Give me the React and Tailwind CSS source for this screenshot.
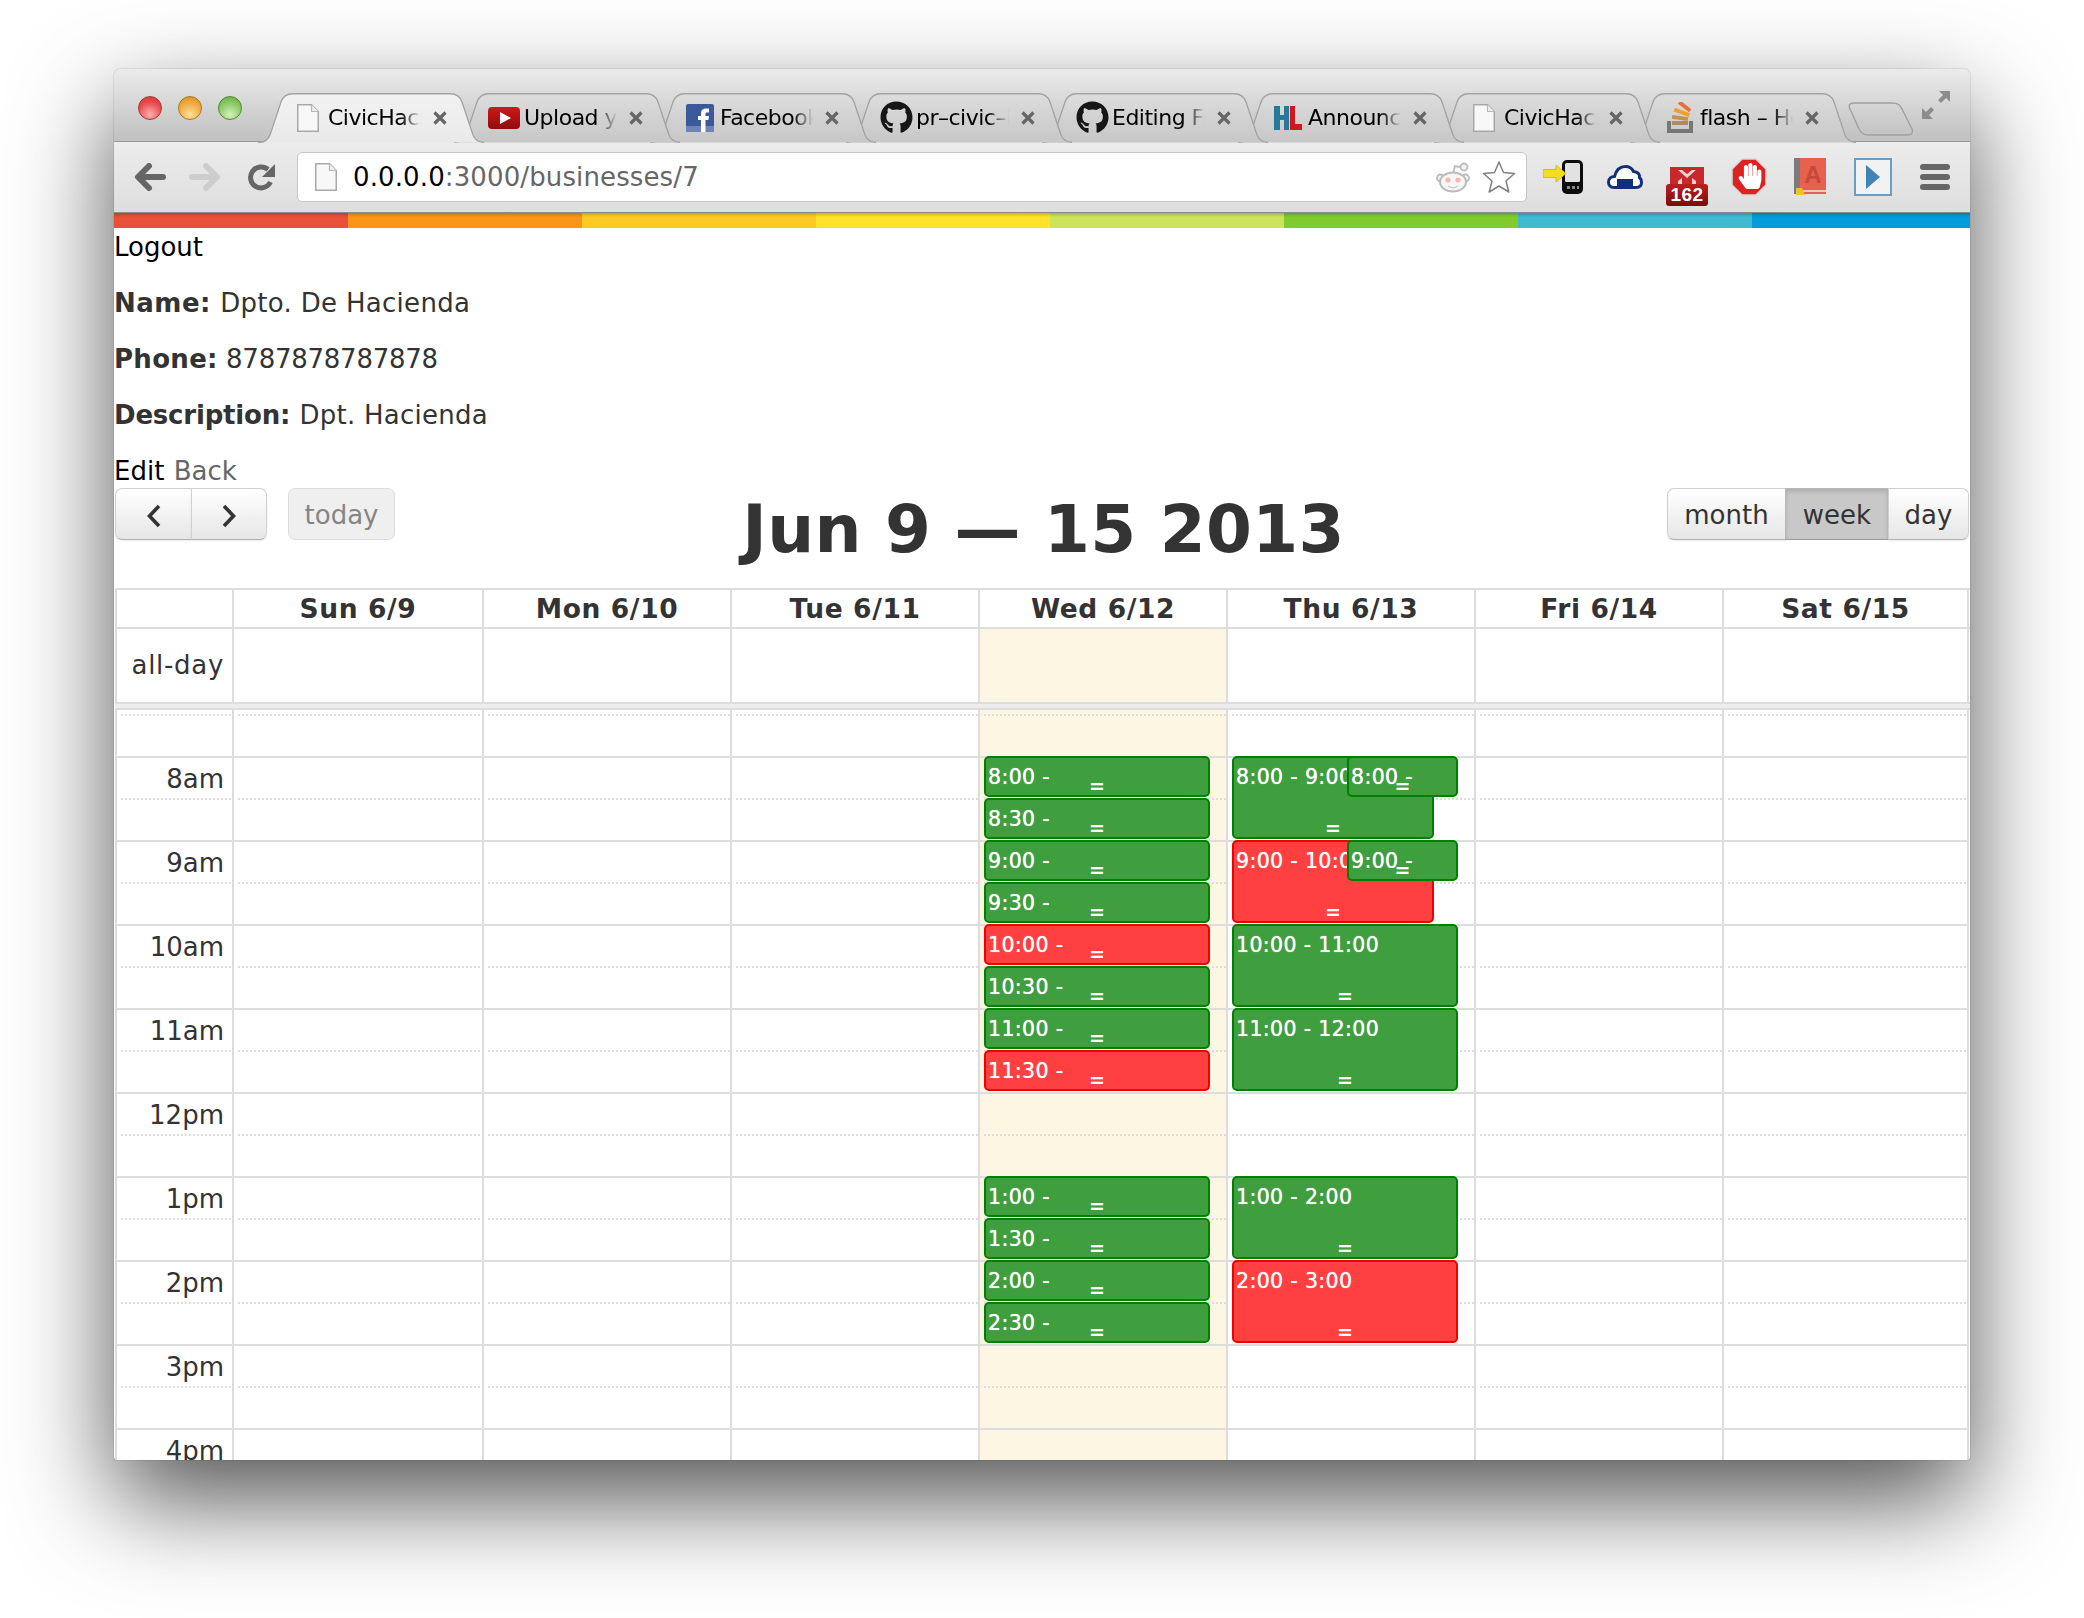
import React from "react";
import { FaGithub, FaHandPaper } from "react-icons/fa";

const COLS = "grid grid-cols-[117px_250px_248px_248px_248px_248px_248px_247px]";
const DAYS = ["Sun 6/9", "Mon 6/10", "Tue 6/11", "Wed 6/12", "Thu 6/13", "Fri 6/14", "Sat 6/15"];
const RAINBOW = ["bg-[#e8503a]", "bg-[#fc9419]", "bg-[#ffc926]", "bg-[#ffe229]", "bg-[#cde35a]", "bg-[#80cb2e]", "bg-[#3fbbd0]", "bg-[#049cdb]"];
const DOTS = "bg-[repeating-linear-gradient(to_right,#ddd_0,#ddd_2px,transparent_2px,transparent_4px)] bg-no-repeat bg-[length:calc(100%-4px)_2px] bg-[position:4px_0] ";

function Doc() {
  return (
    <svg width="22" height="28" viewBox="0 0 22 28">
      <path d="M.75.75H14.5L21.25 7.5V27.25H.75Z" fill="#f8f8f8" stroke="#a8a8a8" strokeWidth="1.5" />
      <path d="M14.5.75V7.5H21.25" fill="#eee" stroke="#b8b8b8" strokeWidth="1.2" />
    </svg>
  );
}
function YouTube() {
  return (
    <svg width="32" height="22" viewBox="0 0 32 22">
      <defs><linearGradient id="yt" x1="0" y1="0" x2="0" y2="1"><stop offset="0" stopColor="#d01818" /><stop offset="1" stopColor="#8e0c0c" /></linearGradient></defs>
      <rect width="32" height="22" rx="4" fill="url(#yt)" />
      <path d="M12 5L23 11L12 17Z" fill="#fff" />
    </svg>
  );
}
function Facebook() {
  return (
    <svg width="28" height="28" viewBox="0 0 28 28">
      <rect width="28" height="28" rx="2" fill="#3b5998" />
      <rect y="22" width="28" height="6" fill="#6d84b4" />
      <path d="M15 28V16H12V12H15V9C15 6 17 4.500 20 4.500H23V8.500H21C19.700 8.500 19.500 9 19.500 10V12H23L22.400 16H19.500V28Z" fill="#fff" />
    </svg>
  );
}
function Hl() {
  return (
    <svg width="28" height="24" viewBox="0 0 28 24">
      <path d="M0 0H6V9H10V0H15V24H10V14H6V24H0Z" fill="#27799a" />
      <path d="M16 0H21V18H28V24H16Z" fill="#cf1820" />
    </svg>
  );
}
function Stack() {
  return (
    <svg width="28" height="32" viewBox="0 0 28 32">
      <path d="M1 19V31H27V19H23V27H5V19Z" fill="#777" />
      <rect x="6" y="19" width="16" height="4" fill="#b08a60" />
      <rect x="6" y="14" width="16" height="4" fill="#c89050" transform="rotate(8 14 16)" />
      <rect x="8" y="8.500" width="16" height="4" fill="#f0a030" transform="rotate(20 16 10)" />
      <rect x="12" y="2.500" width="14" height="4" fill="#e8703a" transform="rotate(38 19 4)" />
    </svg>
  );
}
function Close() {
  return (
    <svg width="14" height="14" viewBox="0 0 14 14">
      <path d="M1.500 1.500L12.500 12.500M12.500 1.500L1.500 12.500" stroke="#666" strokeWidth="3.200" />
    </svg>
  );
}

const TABS = [
  { t: "CivicHack", icon: <Doc />, active: true },
  { t: "Upload your", icon: <YouTube /> },
  { t: "Facebook", icon: <Facebook /> },
  { t: "pr–civic–hack", icon: <FaGithub size={33} color="#161616" /> },
  { t: "Editing File", icon: <FaGithub size={33} color="#161616" /> },
  { t: "Announce", icon: <Hl /> },
  { t: "CivicHack", icon: <Doc /> },
  { t: "flash – How", icon: <Stack /> },
];

function Tab({ tab, i }) {
  return (
    <div className="relative w-[196px] h-[49px] shrink-0 flex items-center" style={{ zIndex: tab.active ? 30 : 20 - i }}>
      <svg className="absolute left-0 top-0" width="226" height="50" viewBox="0 0 226 50">
        <defs>
          <linearGradient id={"tg" + i} x1="0" y1="0" x2="0" y2="1">
            <stop offset="0" stopColor={tab.active ? "#f2f2f2" : "#dddddd"} />
            <stop offset="1" stopColor={tab.active ? "#e9e9e9" : "#c7c7c7"} />
          </linearGradient>
        </defs>
        <path d="M0 49.500C7 49.500 10 47 12 42L23 9C25 3 29 .75 35 .75H192C198 .75 202 3 204 9L215 42C217 47 220 49 226 49.500Z" fill={`url(#tg${i})`} />
        <path d="M0 49.500C7 49.500 10 47 12 42L23 9C25 3 29 .75 35 .75H192C198 .75 202 3 204 9L215 42C217 47 220 49 226 49.500" fill="none" stroke="#a3a3a3" strokeWidth="1.300" />
      </svg>
      <div className="relative ml-[30px] w-[40px] flex justify-center shrink-0">{tab.icon}</div>
      <div className="relative w-[93px] overflow-hidden whitespace-nowrap text-[22px] leading-[30px] tracking-[-0.5px] text-black [mask-image:linear-gradient(to_right,black_78%,transparent_100%)]">{tab.t}</div>
      <div className="relative ml-[12px] shrink-0 flex"><Close /></div>
    </div>
  );
}

function Light({ cls }) {
  return <div className={"w-[24px] h-[24px] rounded-full border " + cls} />;
}

function Phone() {
  return (
    <svg width="40" height="34" viewBox="0 0 40 34">
      <rect x="19" y="0" width="21" height="34" rx="5" fill="#0c0c0c" />
      <rect x="22" y="3" width="15" height="19" rx="1.500" fill="#e2e2e2" />
      <rect x="24" y="26" width="3" height="3" fill="#888" /><rect x="29" y="26" width="3" height="3" fill="#888" /><rect x="34" y="26" width="2" height="3" fill="#888" />
      <path d="M0 9.500H13V5L23 13.500L13 22V17.500H0Z" fill="#f5dd20" stroke="#c8b020" strokeWidth=".8" />
    </svg>
  );
}
function Cloud() {
  return (
    <svg width="36" height="24" viewBox="0 0 36 24">
      <path d="M7 22.500C3 22.500 1.500 19.500 1.500 17C1.500 13.500 4.500 11.500 7.500 11.500C9 5.500 13 1.500 18.500 1.500C22.500 1.500 25 3.500 26.500 6.500C31 6.500 33 10 32.500 12.500C34.500 14 34.500 16 34.500 17.500C34.500 20.500 32.500 22.500 29 22.500Z" fill="#fff" stroke="#12307a" strokeWidth="3" />
      <rect x="10" y="14" width="16" height="8" fill="#12307a" />
    </svg>
  );
}
function Gmail() {
  return (
    <div className="w-[42px] mt-[19px] flex flex-col items-center">
      <div className="w-[34px] h-[17px] bg-[#c8272c] flex justify-center">
        <svg width="22" height="17" viewBox="0 0 22 17"><path d="M2 3H6L11 7L16 3H20L11 11Z M2 14L6 11V17H2Z M20 14L16 11V17H20Z" fill="#f4d0d0" /></svg>
      </div>
      <div className="w-[42px] h-[22px] rounded-[3px] bg-gradient-to-b from-[#bb1f1f] to-[#7d0b0b] text-white font-bold text-[19px] leading-[22px] text-center tracking-[0.5px] [font-family:'Liberation_Sans',sans-serif]">162</div>
    </div>
  );
}
function Adblock() {
  return (
    <svg width="36" height="38" viewBox="0 0 36 38">
      <polygon points="11,1 25,1 35,11 35,27 25,37 11,37 1,27 1,11" fill="#dd2222" stroke="#d8d8d8" strokeWidth="1.600" />
      <FaHandPaper x="6" y="5" size={26} color="#fff" />
    </svg>
  );
}
function Book() {
  return (
    <svg width="32" height="38" viewBox="0 0 32 38">
      <rect x="0" y="0" width="7" height="36" fill="#7b7b7b" />
      <rect x="6" y="0" width="26" height="32" fill="#e8604e" />
      <rect x="6" y="32" width="26" height="2" fill="#f2c8c0" />
      <rect x="6" y="34" width="26" height="2" fill="#e8604e" />
      <text x="19" y="25" textAnchor="middle" fontSize="24" fontWeight="700" fill="#c44a3a" fontFamily="Liberation Sans">A</text>
      <path d="M2 30H8L11 37H2Z" fill="#f0c030" />
    </svg>
  );
}
function Menu() {
  return (
    <div className="w-[30px] flex flex-col gap-[4px]">
      <div className="h-[6px] rounded-full bg-[#666]" />
      <div className="h-[6px] rounded-full bg-[#666]" />
      <div className="h-[6px] rounded-full bg-[#666]" />
    </div>
  );
}

function Chrome() {
  return (
    <>
      <div className="h-[73px] shrink-0 flex items-start border-b border-[#989898] bg-gradient-to-b from-[#ebebeb] to-[#c0c0c0] rounded-t-[6px]">
        <div className="ml-[24px] mt-[27px] flex gap-[16px]">
          <Light cls="border-[#a23a3a] bg-[radial-gradient(circle_at_50%_80%,#fbb0b0,#e94a4a_60%,#d03030)]" />
          <Light cls="border-[#a67a20] bg-[radial-gradient(circle_at_50%_80%,#fde0a0,#eda83a_60%,#d58a20)]" />
          <Light cls="border-[#4f8a30] bg-[radial-gradient(circle_at_50%_80%,#d8f0c0,#86c860_60%,#62a83c)]" />
        </div>
        <div className="ml-[16px] mt-[24px] flex">
          {TABS.map((tab, i) => <Tab key={i} tab={tab} i={i} />)}
        </div>
        <svg className="ml-[22px] mt-[33px] shrink-0" width="66" height="34" viewBox="0 0 66 34">
          <path d="M6 1H44C50 1 52 3 54 7L64 27C65.500 31 63 33 60 33H20C15 33 13 31 11 27L2 7C0 3 2 1 6 1Z" fill="none" stroke="#a0a0a0" strokeWidth="1.400" />
        </svg>
        <svg className="ml-[8px] mt-[22px] shrink-0" width="28" height="28" viewBox="0 0 28 28">
          <path d="M17 0H28V11L24 7L19 12L16 9L21 4Z M0 17V28H11L7 24L12 19L9 16L4 21Z" fill="#8c8c8c" />
        </svg>
      </div>
      <div className="h-[71px] shrink-0 flex items-center pl-[20px] border-b border-[#8c8c8c] bg-gradient-to-b from-[#ececec] to-[#dedede]">
        <svg width="32" height="28" viewBox="0 0 32 28"><path d="M29 14H6M15 3L4 14L15 25" fill="none" stroke="#666" strokeWidth="6" strokeLinecap="round" strokeLinejoin="round" /></svg>
        <svg className="ml-[23px]" width="32" height="28" viewBox="0 0 32 28"><path d="M3 14H26M17 3L28 14L17 25" fill="none" stroke="#cdcdcd" strokeWidth="6" strokeLinecap="round" strokeLinejoin="round" /></svg>
        <svg className="ml-[27px]" width="28" height="28" viewBox="0 0 28 28"><path d="M22.500 19A10.500 10.500 0 1 1 20 6.500" fill="none" stroke="#666" strokeWidth="5" /><path d="M27 1V14H14Z" fill="#666" /></svg>
        <div className="ml-[21px] w-[1230px] h-[50px] shrink-0 rounded-[5px] bg-white border border-[#c6c6c6] flex items-center pl-[17px] pr-[10px]">
          <Doc />
          <div className="ml-[16px] flex-1 text-[26px] leading-[34px] tracking-[0.12px] text-[#666]"><span className="text-black">0.0.0.0</span>:3000/businesses/7</div>
          <svg width="34" height="32" viewBox="0 0 34 32">
            <path d="M17 13L19 5L26 6.500" fill="none" stroke="#bbb" strokeWidth="1.800" />
            <circle cx="28" cy="6" r="3.500" fill="#f4f4f4" stroke="#bbb" strokeWidth="1.800" />
            <circle cx="4.500" cy="17" r="3.500" fill="#f4f4f4" stroke="#bbb" strokeWidth="1.800" />
            <circle cx="29.500" cy="17" r="3.500" fill="#f4f4f4" stroke="#bbb" strokeWidth="1.800" />
            <ellipse cx="17" cy="21" rx="13" ry="9.500" fill="#f6f6f6" stroke="#bbb" strokeWidth="2" />
            <circle cx="12" cy="19" r="2.600" fill="#f8b8a8" /><circle cx="22" cy="19" r="2.600" fill="#f8b8a8" />
            <path d="M12 25C15 27 19 27 22 25" fill="none" stroke="#c8c8c8" strokeWidth="1.500" />
          </svg>
          <svg className="ml-[12px]" width="34" height="34" viewBox="0 0 34 34">
            <path d="M17 2L21.500 12.500L32.500 13.500L24 21L26.800 32L17 26L7.200 32L10 21L1.500 13.500L12.500 12.500Z" fill="#fff" stroke="#808080" strokeWidth="1.500" strokeLinejoin="round" />
          </svg>
        </div>
        <div className="ml-[16px] flex"><Phone /></div>
        <div className="ml-[24px] flex"><Cloud /></div>
        <div className="ml-[23px] flex"><Gmail /></div>
        <div className="ml-[23px] flex"><Adblock /></div>
        <div className="ml-[27px] flex"><Book /></div>
        <div className="ml-[28px] w-[38px] h-[38px] border-2 border-[#6a9cc4] bg-[#f2f2f2] flex items-center justify-center">
          <svg width="14" height="24" viewBox="0 0 14 24"><path d="M0 0L14 12L0 24Z" fill="#3f84b4" /></svg>
        </div>
        <div className="ml-[28px] flex"><Menu /></div>
      </div>
      <div className="relative h-[15px] shrink-0 overflow-hidden">
        <div className="grid grid-cols-[repeat(8,234px)] h-full">
          {RAINBOW.map((c, i) => <div key={i} className={c} />)}
        </div>
        <div className="absolute inset-x-0 top-0 h-[4px] bg-gradient-to-b from-black/20 to-transparent" />
      </div>
    </>
  );
}

const BTN = "h-[52px] pt-[3px] flex items-center justify-center text-[26px] text-[#333] border border-[#d0d0d0] border-b-[#b0b0b0] bg-gradient-to-b from-white to-[#e6e6e6] shadow-[0_1px_2px_rgba(0,0,0,0.08)]";

function CalHeader() {
  return (
    <div className="h-[100px] grid grid-cols-[1fr_auto_1fr] items-start">
      <div className="flex">
        <button className={BTN + " w-[77px] rounded-l-[7px]"}>
          <svg width="16" height="24" viewBox="0 0 16 24"><path d="M13 2L3.500 12L13 22" fill="none" stroke="#333" strokeWidth="3.600" /></svg>
        </button>
        <button className={BTN + " w-[76px] rounded-r-[7px] -ml-px"}>
          <svg width="16" height="24" viewBox="0 0 16 24"><path d="M3 2L12.500 12L3 22" fill="none" stroke="#333" strokeWidth="3.600" /></svg>
        </button>
        <button className="ml-[21px] w-[107px] h-[52px] pt-[3px] rounded-[7px] bg-[#efefef] border border-[#dcdcdc] text-[26px] text-[#858585]">today</button>
      </div>
      <div className="mt-[1px] ml-[2px] text-[66px] leading-[82px] font-bold text-[#333] tracking-[0.3px] whitespace-nowrap">Jun 9 — 15 2013</div>
      <div className="flex justify-end mr-[1px]">
        <button className={BTN + " w-[119px] rounded-l-[7px]"}>month</button>
        <button className="h-[52px] pt-[3px] w-[104px] -ml-px text-[26px] text-[#333] bg-[#c8c8c8] border border-[#b8b8b8] border-b-[#999] shadow-[inset_0_3px_4px_rgba(0,0,0,0.12)]">week</button>
        <button className={BTN + " w-[81px] -ml-px rounded-r-[7px]"}>day</button>
      </div>
    </div>
  );
}

const SLOTS = [
  { kind: "dotted" },
  { kind: "solid", label: "8am" }, { kind: "dotted" },
  { kind: "solid", label: "9am" }, { kind: "dotted" },
  { kind: "solid", label: "10am" }, { kind: "dotted" },
  { kind: "solid", label: "11am" }, { kind: "dotted" },
  { kind: "solid", label: "12pm" }, { kind: "dotted" },
  { kind: "solid", label: "1pm" }, { kind: "dotted" },
  { kind: "solid", label: "2pm" }, { kind: "dotted" },
  { kind: "solid", label: "3pm" }, { kind: "dotted" },
  { kind: "solid", label: "4pm" },
];

function Event({ e }) {
  const red = e.c === "r";
  return (
    <div
      className={"absolute overflow-hidden rounded-[5px] border-2 text-white " + (red ? "bg-[#ff4040] border-[#f00000]" : "bg-[#3f9f3f] border-[#008000]")}
      style={{ left: e.x, top: 46 + e.s * 42, width: e.w, height: e.n * 42 - 1 }}
    >
      <div className="pl-[2px] pt-[5px] text-[20.500px] leading-[28px] tracking-[0.35px] whitespace-nowrap [text-shadow:0_0_0.7px_#fff]">{e.t}</div>
      <div className="absolute left-0 right-0 bottom-[-1px] text-center text-[19px] leading-[20px] font-bold">=</div>
    </div>
  );
}

const W = 869, T = 1117, S = 1232;
const EVENTS = [
  ...[["8:00 -", 0, "g"], ["8:30 -", 1, "g"], ["9:00 -", 2, "g"], ["9:30 -", 3, "g"], ["10:00 -", 4, "r"], ["10:30 -", 5, "g"], ["11:00 -", 6, "g"], ["11:30 -", 7, "r"], ["1:00 -", 10, "g"], ["1:30 -", 11, "g"], ["2:00 -", 12, "g"], ["2:30 -", 13, "g"]]
    .map(([t, s, c]) => ({ t, s, c, x: W, w: 226, n: 1 })),
  { t: "8:00 - 9:00", s: 0, c: "g", x: T, w: 202, n: 2 },
  { t: "9:00 - 10:00", s: 2, c: "r", x: T, w: 202, n: 2 },
  { t: "8:00 -", s: 0, c: "g", x: S, w: 111, n: 1 },
  { t: "9:00 -", s: 2, c: "g", x: S, w: 111, n: 1 },
  { t: "10:00 - 11:00", s: 4, c: "g", x: T, w: 226, n: 2 },
  { t: "11:00 - 12:00", s: 6, c: "g", x: T, w: 226, n: 2 },
  { t: "1:00 - 2:00", s: 10, c: "g", x: T, w: 226, n: 2 },
  { t: "2:00 - 3:00", s: 12, c: "r", x: T, w: 226, n: 2 },
];

function Calendar() {
  return (
    <div className="text-[#333]">
      <div className={COLS + " h-[39px] border-t-2 border-[#ddd]"}>
        <div className="border-l-2 border-[#ddd]" />
        {DAYS.map((d, i) => (
          <div key={d} className={"border-l-2 border-[#ddd] text-center font-bold text-[26.500px] tracking-[0.6px] leading-[38px] " + (i === 6 ? "border-r-2" : "")}>{d}</div>
        ))}
      </div>
      <div className={COLS + " h-[75px] border-t-2 border-[#ddd]"}>
        <div className="border-l-2 border-[#ddd] text-right pr-[8px] text-[26px] tracking-[0.7px] leading-[73px]">all-day</div>
        {DAYS.map((d, i) => (
          <div key={d} className={"border-l-2 border-[#ddd] " + (i === 3 ? "bg-[#fdf6e3] " : "") + (i === 6 ? "border-r-2" : "")} />
        ))}
      </div>
      <div className="h-[8px] bg-[#ededed] border-y-2 border-[#ddd]" />
      <div className="relative">
        <div className={COLS + " h-[4px]"}>
          <div className="border-l-2 border-[#ddd]" />
          {DAYS.map((d, i) => (
            <div key={d} className={"border-l-2 border-[#ddd] " + (i === 3 ? "bg-[#fdf6e3] " : "") + (i === 6 ? "border-r-2" : "")} />
          ))}
        </div>
        {SLOTS.map((s, r) => {
          const line = s.kind === "dotted" ? DOTS : "border-t-2 border-t-[#ddd] ";
          return (
            <div key={r} className={COLS + " h-[42px]"}>
              <div className={"border-l-2 border-l-[#ddd] text-right pr-[8px] text-[26px] leading-[43px] " + line}>{s.label}</div>
              {DAYS.map((d, i) => (
                <div key={d} className={"border-l-2 border-l-[#ddd] " + line + (i === 3 ? "bg-[#fdf6e3] " : "") + (i === 6 ? "border-r-2 border-r-[#ddd]" : "")} />
              ))}
            </div>
          );
        })}
        {EVENTS.map((e, i) => <Event key={i} e={e} />)}
      </div>
    </div>
  );
}

export default function App() {
  return (
    <div className="w-[2084px] h-[1618px] overflow-hidden bg-white pl-[114px] pt-[69px] [font-family:'DejaVu_Sans',sans-serif]">
      <div className="w-[1856px] h-[1391px] flex flex-col bg-white rounded-t-[6px] rounded-b-[3px] shadow-[0_40px_100px_rgba(0,0,0,0.68),0_0_1px_rgba(0,0,0,0.7)]">
        <Chrome />
        <div className="flex-1 min-h-0 overflow-hidden text-[26px] text-[#333] rounded-b-[3px]">
          <div className="h-[38px] leading-[38px] text-black">Logout</div>
          <div className="mt-[18px] h-[38px] leading-[38px]"><b className="tracking-[0.5px]">Name:</b> <span className="ml-[1px] tracking-[0.3px]">Dpto. De Hacienda</span></div>
          <div className="mt-[18px] h-[38px] leading-[38px]"><b className="tracking-[0.3px]">Phone:</b> <span className="tracking-[-0.25px]">8787878787878</span></div>
          <div className="mt-[18px] h-[38px] leading-[38px]"><b className="tracking-[-0.2px]">Description:</b> <span className="ml-[1px] tracking-[0.25px]">Dpt. Hacienda</span></div>
          <div className="mt-[18px] h-[36px] leading-[38px]"><span className="text-black">Edit</span> <span className="ml-[1px] text-[#666]">Back</span></div>
          <div className="pl-px">
            <CalHeader />
            <Calendar />
          </div>
        </div>
      </div>
    </div>
  );
}
